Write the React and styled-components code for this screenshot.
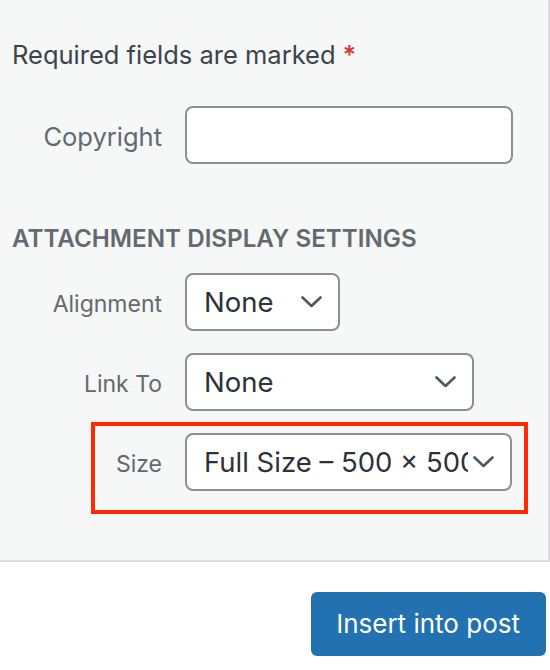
import React from "react";
import styled, { createGlobalStyle } from "styled-components";

const Global = createGlobalStyle`
  html, body { margin: 0; padding: 0; background: #ffffff; }
  body { font-family: Inter, "Open Sans", "Liberation Sans", sans-serif; -webkit-font-smoothing: antialiased; }
  * { box-sizing: border-box; }
`;

const Page = styled.div`
  width: 550px;
  height: 670px;
  background: #ffffff;
  overflow: hidden;
`;

const Panel = styled.div`
  width: 550px;
  height: 562px;
  background: #f6f7f7;
  border-right: 2px solid #dcdcde;
  border-bottom: 2px solid #dcdcde;
  padding: 37px 0 0 12px;
`;

const Required = styled.p`
  margin: 0;
  font-size: 25.5px;
  line-height: 36px;
  color: #3c434a;
`;

const Star = styled.span`
  color: #d63638;
  font-weight: 600;
  margin-left: 7px;
`;

const Row = styled.div`
  position: relative;
  display: grid;
  grid-template-columns: 150px 1fr;
  column-gap: 23px;
  align-items: center;
  margin-top: ${(p) => p.$top}px;
`;

const Label = styled.label`
  text-align: right;
  font-size: ${(p) => p.$size || 23}px;
  line-height: 30px;
  padding-top: 4px;
  color: #646970;
`;

const TextInput = styled.div`
  width: 328px;
  height: 58px;
  background: #ffffff;
  border: 2px solid #8c8f94;
  border-radius: 8px;
`;

const Select = styled.div`
  width: ${(p) => p.$w}px;
  height: 58px;
  background: #ffffff;
  border: 2px solid #8c8f94;
  border-radius: 8px;
  display: flex;
  align-items: center;
  padding: 0 16px 0 17px;
  gap: 5px;
`;

const Value = styled.span`
  flex: 1;
  min-width: 0;
  overflow: hidden;
  white-space: nowrap;
  font-size: 27.5px;
  line-height: 34px;
  color: #2c3338;
`;

const Heading = styled.h2`
  margin: 58px 0 0 0;
  font-size: 24.2px;
  line-height: 34px;
  font-weight: 600;
  color: #646970;
  text-transform: uppercase;
`;

const Highlight = styled.div`
  position: absolute;
  left: 79px;
  top: -11px;
  width: 437px;
  height: 92px;
  border: 4px solid #ff2a00;
  pointer-events: none;
`;

const Footer = styled.div`
  display: flex;
  justify-content: flex-end;
  padding: 30px 4px 0 0;
`;

const Button = styled.button`
  height: 64px;
  padding: 0 26px 0 25px;
  background: #2271b1;
  border: none;
  border-radius: 6px;
  color: #ffffff;
  font-family: inherit;
  font-size: 26px;
  line-height: 34px;
`;

const Chevron = () => (
  <svg width="21" height="12" viewBox="0 0 21 12" fill="none">
    <polyline points="1.5,1.5 10.5,10 19.5,1.5" stroke="#50575e" strokeWidth="2.6" strokeLinecap="round" strokeLinejoin="round" />
  </svg>
);

export default function App() {
  return (
    <Page>
      <Global />
      <Panel>
        <Required>
          Required fields are marked<Star>*</Star>
        </Required>
        <Row $top={33}>
          <Label $size={25.5}>Copyright</Label>
          <TextInput />
        </Row>
        <Heading>Attachment Display Settings</Heading>
        <Row $top={17}>
          <Label>Alignment</Label>
          <Select $w={155}>
            <Value>None</Value>
            <Chevron />
          </Select>
        </Row>
        <Row $top={22}>
          <Label>Link To</Label>
          <Select $w={289}>
            <Value>None</Value>
            <Chevron />
          </Select>
        </Row>
        <Row $top={22}>
          <Label>Size</Label>
          <Select $w={327}>
            <Value>Full Size – 500 × 500</Value>
            <Chevron />
          </Select>
          <Highlight />
        </Row>
      </Panel>
      <Footer>
        <Button>Insert into post</Button>
      </Footer>
    </Page>
  );
}
